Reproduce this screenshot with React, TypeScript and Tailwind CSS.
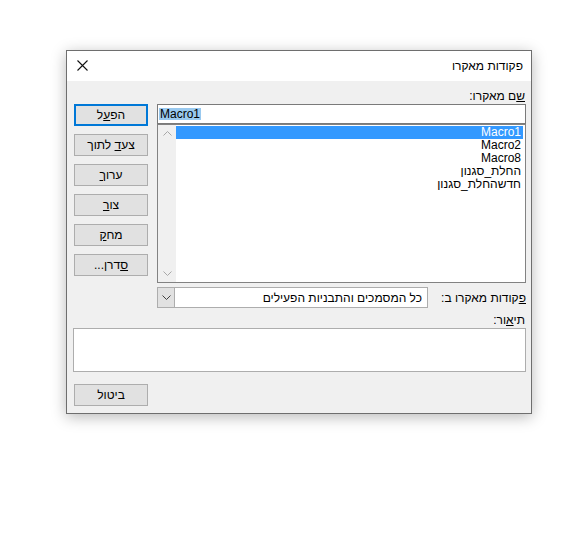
const font = "font-['Liberation_Sans','DejaVu_Sans',sans-serif]";

const macros = ["Macro1", "Macro2", "Macro8", "החלת_סגנון", "חדשהחלת_סגנון"];

const Chevron = ({ up, color }: { up?: boolean; color: string }) => (
    <svg width="9" height="5" viewBox="0 0 9 5" fill="none">
        <path d={up ? "M0.5 4.5 L4.5 0.5 L8.5 4.5" : "M0.5 0.5 L4.5 4.5 L8.5 0.5"} stroke={color} strokeWidth="1" />
    </svg>
);

type BtnProps = {
    children: React.ReactNode;
    primary?: boolean;
};

const DlgButton = ({ children, primary }: BtnProps) => (
    <button
        type="button"
        dir="rtl"
        className={
            "h-[22px] w-[74px] bg-[#e1e1e1] text-[12px] leading-none text-black flex items-center justify-center " +
            (primary ? "border-2 border-[#0078d7]" : "border border-[#adadad]")
        }
    >
        <span>{children}</span>
    </button>
);

export default function App() {
    return (
        <div className={`min-h-[550px] w-[562px] bg-white pt-[50px] pl-[66px] ${font}`}>
            <div className="w-[466px] h-[364px] border border-[#6e6e6e] bg-[#f0f0f0] flex flex-col shadow-[0_3px_14px_rgba(0,0,0,0.28)]">
                {/* title bar */}
                <div className="h-[30px] bg-white flex items-center justify-between pl-[10px] pr-[8px]">
                    <svg width="11" height="11" viewBox="0 0 11 11" className="mt-[-1px]">
                        <path d="M0.5 0.5 L10.5 10.5 M10.5 0.5 L0.5 10.5" stroke="#111" strokeWidth="1.1" />
                    </svg>
                    <span dir="rtl" className="text-[12px] text-black">פקודות מאקרו</span>
                </div>

                {/* body */}
                <div className="flex-1 flex flex-col pl-[6px] pr-[5px] pt-[7px] pb-[7px] text-[12px] text-black">
                    <div dir="rtl" className="h-[16px] leading-[16px] pr-[1px]">
                        <u>ש</u>ם מאקרו:
                    </div>

                    <div className="flex h-[204px] gap-[9px] pl-[1px]">
                        <div className="flex flex-col gap-[8px]">
                            <DlgButton primary>הפ<u>ע</u>ל</DlgButton>
                            <DlgButton>צע<u>ד</u> לתוך</DlgButton>
                            <DlgButton>ערו<u>ך</u></DlgButton>
                            <DlgButton>צו<u>ר</u></DlgButton>
                            <DlgButton>מח<u>ק</u></DlgButton>
                            <DlgButton><u>ס</u>דרן...</DlgButton>
                        </div>

                        <div className="flex-1 flex flex-col">
                            <div className="h-[20px] border border-[#7a7a7a] bg-white flex items-center pl-[1px]">
                                <span className="bg-[#99c9ef] leading-[12px] px-[1px]">Macro1</span>
                            </div>
                            <div className="h-[159px] border border-[#828282] bg-white flex">
                                <div className="w-[18px] bg-[#f0f0f0] flex flex-col items-center justify-between py-[6px]">
                                    <Chevron up color="#a8a8a8" />
                                    <Chevron color="#a8a8a8" />
                                </div>
                                <div dir="rtl" className="flex-1 flex flex-col pt-[1px] pr-[2px]">
                                    {macros.map((m, i) => (
                                        <div
                                            key={m}
                                            className={
                                                "h-[13px] leading-[13px] pr-[2px] text-[12px] " +
                                                (i === 0 ? "bg-[#3399ff] text-white" : "text-black")
                                            }
                                        >
                                            {m}
                                        </div>
                                    ))}
                                </div>
                            </div>
                            <div className="mt-[4px] h-[21px] flex items-stretch">
                                <div className="w-[18px] border border-[#adadad] bg-[#e1e1e1] flex items-center justify-center">
                                    <Chevron color="#404040" />
                                </div>
                                <div dir="rtl" className="w-[253px] border border-l-0 border-[#adadad] bg-white flex items-center pr-[5px]">
                                    כל המסמכים והתבניות הפעילים
                                </div>
                                <div dir="rtl" className="flex-1 flex items-center">
                                    <span><u>פ</u>קודות מאקרו ב:</span>
                                </div>
                            </div>
                        </div>
                    </div>

                    <div dir="rtl" className="mt-[4px] h-[16px] leading-[16px] pr-[1px]">
                        תי<u>א</u>ור:
                    </div>
                    <div className="h-[44px] border border-[#adadad] bg-white" />

                    <div className="mt-[12px] pl-[1px]">
                        <DlgButton>ביטול</DlgButton>
                    </div>
                </div>
            </div>
        </div>
    );
}
